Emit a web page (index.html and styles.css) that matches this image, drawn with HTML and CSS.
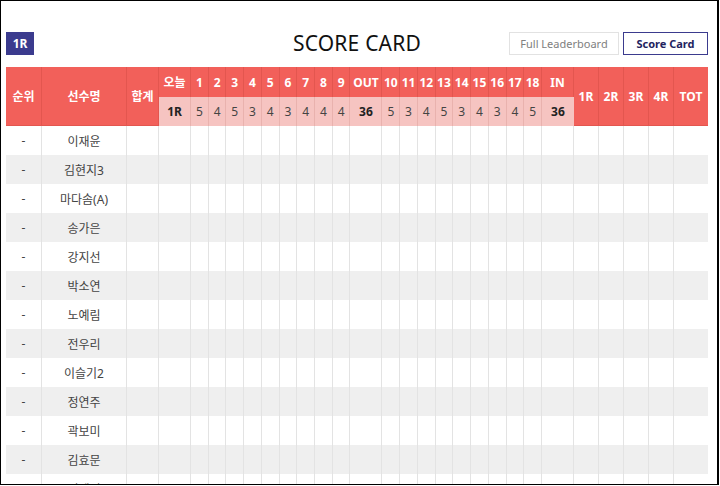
FILE: index.html
```html
<!DOCTYPE html>
<html lang="ko">
<head>
<meta charset="utf-8">
<title>Score Card</title>
<link rel="stylesheet" href="styles.css">
</head>
<body>
<div class="frame">
  <div class="topbar">
    <div class="left"><span class="round-badge">1R</span></div>
    <h1 class="title">SCORE CARD</h1>
    <div class="right">
      <a class="btn btn-light">Full Leaderboard</a>
      <a class="btn btn-active">Score Card</a>
    </div>
  </div>
  <table class="score">
    <colgroup>
      <col class="w-rank"><col class="w-name"><col class="w-sum"><col class="w-today">
      <col class="w-h"><col class="w-h"><col class="w-h"><col class="w-h"><col class="w-h"><col class="w-h"><col class="w-h"><col class="w-h"><col class="w-h">
      <col class="w-half">
      <col class="w-h"><col class="w-h"><col class="w-h"><col class="w-h"><col class="w-h"><col class="w-h"><col class="w-h"><col class="w-h"><col class="w-h">
      <col class="w-half">
      <col class="w-r"><col class="w-r"><col class="w-r"><col class="w-r"><col class="w-tot">
    </colgroup>
    <thead>
      <tr class="hr1">
        <th rowspan="2">순위</th>
        <th rowspan="2">선수명</th>
        <th rowspan="2">합계</th>
        <th>오늘</th>
        <th>1</th><th>2</th><th>3</th><th>4</th><th>5</th><th>6</th><th>7</th><th>8</th><th>9</th>
        <th>OUT</th>
        <th>10</th><th>11</th><th>12</th><th>13</th><th>14</th><th>15</th><th>16</th><th>17</th><th>18</th>
        <th>IN</th>
        <th rowspan="2">1R</th><th rowspan="2">2R</th><th rowspan="2">3R</th><th rowspan="2">4R</th><th rowspan="2">TOT</th>
      </tr>
      <tr class="hr2">
        <th class="b">1R</th>
        <td>5</td><td>4</td><td>5</td><td>3</td><td>4</td><td>3</td><td>4</td><td>4</td><td>4</td>
        <th class="b">36</th>
        <td>5</td><td>3</td><td>4</td><td>5</td><td>3</td><td>4</td><td>3</td><td>4</td><td>5</td>
        <th class="b">36</th>
      </tr>
    </thead>
    <tbody>
      <tr><td>-</td><td>이재윤</td><td></td><td></td><td></td><td></td><td></td><td></td><td></td><td></td><td></td><td></td><td></td><td></td><td></td><td></td><td></td><td></td><td></td><td></td><td></td><td></td><td></td><td></td><td></td><td></td><td></td><td></td><td></td></tr>
      <tr><td>-</td><td>김현지3</td><td></td><td></td><td></td><td></td><td></td><td></td><td></td><td></td><td></td><td></td><td></td><td></td><td></td><td></td><td></td><td></td><td></td><td></td><td></td><td></td><td></td><td></td><td></td><td></td><td></td><td></td><td></td></tr>
      <tr><td>-</td><td>마다솜(A)</td><td></td><td></td><td></td><td></td><td></td><td></td><td></td><td></td><td></td><td></td><td></td><td></td><td></td><td></td><td></td><td></td><td></td><td></td><td></td><td></td><td></td><td></td><td></td><td></td><td></td><td></td><td></td></tr>
      <tr><td>-</td><td>송가은</td><td></td><td></td><td></td><td></td><td></td><td></td><td></td><td></td><td></td><td></td><td></td><td></td><td></td><td></td><td></td><td></td><td></td><td></td><td></td><td></td><td></td><td></td><td></td><td></td><td></td><td></td><td></td></tr>
      <tr><td>-</td><td>강지선</td><td></td><td></td><td></td><td></td><td></td><td></td><td></td><td></td><td></td><td></td><td></td><td></td><td></td><td></td><td></td><td></td><td></td><td></td><td></td><td></td><td></td><td></td><td></td><td></td><td></td><td></td><td></td></tr>
      <tr><td>-</td><td>박소연</td><td></td><td></td><td></td><td></td><td></td><td></td><td></td><td></td><td></td><td></td><td></td><td></td><td></td><td></td><td></td><td></td><td></td><td></td><td></td><td></td><td></td><td></td><td></td><td></td><td></td><td></td><td></td></tr>
      <tr><td>-</td><td>노예림</td><td></td><td></td><td></td><td></td><td></td><td></td><td></td><td></td><td></td><td></td><td></td><td></td><td></td><td></td><td></td><td></td><td></td><td></td><td></td><td></td><td></td><td></td><td></td><td></td><td></td><td></td><td></td></tr>
      <tr><td>-</td><td>전우리</td><td></td><td></td><td></td><td></td><td></td><td></td><td></td><td></td><td></td><td></td><td></td><td></td><td></td><td></td><td></td><td></td><td></td><td></td><td></td><td></td><td></td><td></td><td></td><td></td><td></td><td></td><td></td></tr>
      <tr><td>-</td><td>이슬기2</td><td></td><td></td><td></td><td></td><td></td><td></td><td></td><td></td><td></td><td></td><td></td><td></td><td></td><td></td><td></td><td></td><td></td><td></td><td></td><td></td><td></td><td></td><td></td><td></td><td></td><td></td><td></td></tr>
      <tr><td>-</td><td>정연주</td><td></td><td></td><td></td><td></td><td></td><td></td><td></td><td></td><td></td><td></td><td></td><td></td><td></td><td></td><td></td><td></td><td></td><td></td><td></td><td></td><td></td><td></td><td></td><td></td><td></td><td></td><td></td></tr>
      <tr><td>-</td><td>곽보미</td><td></td><td></td><td></td><td></td><td></td><td></td><td></td><td></td><td></td><td></td><td></td><td></td><td></td><td></td><td></td><td></td><td></td><td></td><td></td><td></td><td></td><td></td><td></td><td></td><td></td><td></td><td></td></tr>
      <tr><td>-</td><td>김효문</td><td></td><td></td><td></td><td></td><td></td><td></td><td></td><td></td><td></td><td></td><td></td><td></td><td></td><td></td><td></td><td></td><td></td><td></td><td></td><td></td><td></td><td></td><td></td><td></td><td></td><td></td><td></td></tr>
      <tr><td>-</td><td>전예성</td><td></td><td></td><td></td><td></td><td></td><td></td><td></td><td></td><td></td><td></td><td></td><td></td><td></td><td></td><td></td><td></td><td></td><td></td><td></td><td></td><td></td><td></td><td></td><td></td><td></td><td></td><td></td></tr>
    </tbody>
  </table>
</div>
</body>
</html>
```

FILE: styles.css
```css
* { box-sizing: border-box; }
html, body { margin: 0; padding: 0; background: #fff; }
body {
  font-family: "Noto Sans", "Noto Sans CJK KR", sans-serif;
  color: #444;
}
.frame {
  width: 719px;
  height: 485px;
  border: 1px solid #000;
  border-right-width: 2px;
  overflow: hidden;
  padding: 31px 0 0 5px;
}
.topbar {
  width: 702px;
  display: grid;
  grid-template-columns: 1fr auto 1fr;
  align-items: center;
  height: 23px;
  margin-bottom: 12px;
}
.left { display: flex; }
.round-badge {
  display: inline-flex;
  align-items: center;
  justify-content: center;
  width: 28px;
  height: 23px;
  background: #3b3b8e;
  color: #fff;
  font-size: 12px;
  font-weight: 700;
}
.title {
  margin: 0;
  font-family: "Noto Sans", "Noto Sans CJK KR", sans-serif;
  font-weight: 400;
  font-size: 21px;
  line-height: 23px;
  color: #111;
  letter-spacing: 0.2px;
}
.right { display: flex; justify-content: flex-end; gap: 4px; }
.btn {
  display: inline-flex;
  align-items: center;
  justify-content: center;
  height: 23px;
  font-size: 11px;
  text-decoration: none;
}
.btn-light {
  width: 110px;
  border: 1px solid #e2e2e2;
  color: #808080;
}
.btn-active {
  width: 85px;
  border: 1px solid #3b3b8e;
  color: #23235e;
  font-weight: 700;
}

.score {
  width: 702px;
  table-layout: fixed;
  border-collapse: separate;
  border-spacing: 0;
  font-size: 12px;
}
.w-rank { width: 36px; }
.w-name { width: 85px; }
.w-sum { width: 32px; }
.w-today { width: 32px; }
.w-h { width: 17.72px; }
.w-half { width: 32px; }
.w-r { width: 25px; }
.w-tot { width: 34px; }

.score th, .score td {
  padding: 0;
  text-align: center;
  white-space: nowrap;
  overflow: hidden;
  border-right: 1px solid #e3e3e3;
}
.score tr > :last-child { border-right: 0; }
.score thead th {
  background: #f2605a;
  color: #fff;
  font-weight: 700;
  border-right-color: #e3564f;
}
.hr1 th { height: 30px; }
.hr2 > * { height: 29px; }
.hr2 td, .hr2 th.b {
  background: #f6c4c1;
  color: #444;
  border-right-color: #e9b2ae;
}
.hr2 th.b { color: #222; font-weight: 700; }
.hr1 th[rowspan] { border-bottom: 1px solid #e3564f; }

.score tbody td { height: 29px; color: #444; }
.score tbody tr:nth-child(even) td { background: #efefef; }
```
